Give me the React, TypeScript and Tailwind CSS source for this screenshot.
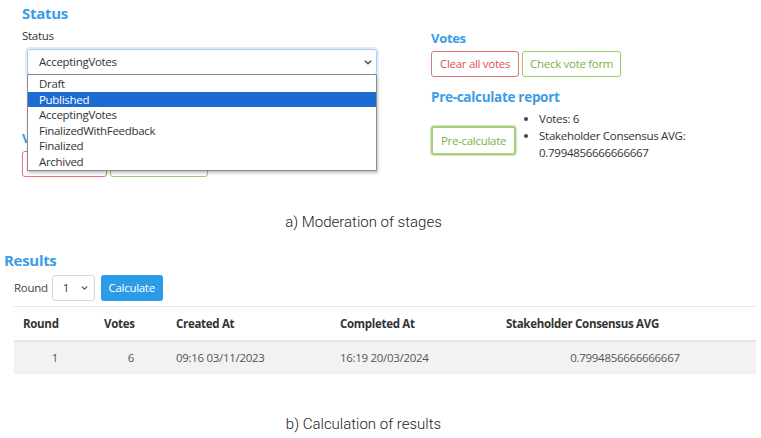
import React from "react";

const UI = { fontFamily: '"Open Sans", "Noto Sans", sans-serif' };
const CAPTION = { fontFamily: 'Roboto, "Open Sans", sans-serif' };

function Chevron({ className = "" }: { className?: string }) {
  return (
    <svg viewBox="0 0 10 6" className={className} fill="none" stroke="#444" strokeWidth="1.6" strokeLinecap="round" strokeLinejoin="round">
      <path d="M1.5 1.2 5 4.6 8.5 1.2" />
    </svg>
  );
}

const statuses = ["Draft", "Published", "AcceptingVotes", "FinalizedWithFeedback", "Finalized", "Archived"];

function StatusPanel() {
  return (
    <div className="w-[431px] pl-[22px]">
      <h2 className="mt-[3px] text-[15px] font-bold leading-[20px] tracking-[-0.3px] text-[#3a9be6]">Status</h2>
      <div className="mt-[5px] text-[11.5px] leading-[16px] tracking-[-0.3px] text-[#333]">Status</div>
      <div className="relative ml-[5px] mt-[5px] w-[350px]">
        <div className="flex h-[26px] items-center justify-between rounded-[3px] border border-[#a6d0f3] pl-[11px] pr-[4px] text-[11.5px] tracking-[-0.3px] text-[#333] shadow-[0_0_0_2px_rgba(160,205,245,0.35)]">
          <span>AcceptingVotes</span>
          <Chevron className="h-[5px] w-[8px]" />
        </div>
        {/* section partly covered by the open list */}
        <div className="-ml-[5px] mt-[54px]">
          <h2 className="text-[13px] font-bold leading-[18px] tracking-[-0.3px] text-[#3a9be6]">Votes</h2>
          <div className="mt-[4px] flex gap-[3px]">
            <div className="h-[26px] w-[85px] rounded-[3px] border border-[#e57373]" />
            <div className="h-[26px] w-[98px] rounded-[3px] border border-[#9ccc65]" />
          </div>
        </div>
        <ul className="absolute left-0 top-[25px] w-[350px] border border-[#8c8c8c] bg-white py-[1px] text-[11.5px] tracking-[-0.3px] text-[#333] shadow-[1px_2px_3px_rgba(0,0,0,0.25)]">
          {statuses.map((s) => (
            <li
              key={s}
              className={
                "h-[15.5px] pl-[11px] leading-[15.5px] " +
                (s === "Published" ? "bg-[#1c6bd3] text-white" : "")
              }
            >
              {s}
            </li>
          ))}
        </ul>
      </div>
    </div>
  );
}

function VotesPanel() {
  return (
    <div className="pt-[29px] tracking-[-0.3px]">
      <h2 className="text-[13px] font-bold leading-[18px] text-[#3a9be6]">Votes</h2>
      <div className="mt-[4px] flex gap-[3px]">
        <button className="h-[26px] rounded-[3px] border border-[#e57373] px-[8px] text-[11.5px] text-[#d9534f]">Clear all votes</button>
        <button className="h-[26px] rounded-[3px] border border-[#9ccc65] px-[7px] text-[11.5px] text-[#7cb342]">Check vote form</button>
      </div>
      <h2 className="mt-[11px] text-[13.5px] font-bold leading-[18px] text-[#3a9be6]">Pre-calculate report</h2>
      <div className="mt-[4px] flex">
        <button className="mt-[16px] h-[29px] rounded-[3px] border-2 border-[#a5cf7c] px-[8px] text-[11.5px] text-[#7cb342] shadow-[0_0_0_1px_rgba(165,207,124,0.45)]">
          Pre-calculate
        </button>
        <ul className="ml-[10px] list-disc pl-[13px] text-[11.5px] leading-[17px] text-[#333] marker:text-[#444]">
          <li>Votes: 6</li>
          <li>
            Stakeholder Consensus AVG:
            <br />
            0.7994856666666667
          </li>
        </ul>
      </div>
    </div>
  );
}

const rows = [{ round: "1", votes: "6", created: "09:16 03/11/2023", completed: "16:19 20/03/2024", avg: "0.7994856666666667" }];

function ResultsPanel() {
  return (
    <div className="tracking-[-0.3px]">
      <h2 className="pl-[4px] text-[15px] font-bold leading-[20px] text-[#3a9be6]">Results</h2>
      <div className="mt-[5px] flex h-[26px] items-center pl-[14px] text-[11.5px] text-[#444]">
        <span>Round</span>
        <div className="ml-[4px] flex h-[26px] w-[43px] items-center justify-between rounded-[3px] border border-[#d6d6d6] pl-[10px] pr-[6px] text-[#333]">
          <span>1</span>
          <Chevron className="h-[4px] w-[7px]" />
        </div>
        <button className="ml-[6px] h-[26px] w-[62px] rounded-[3px] bg-[#2c9ce8] text-[11.5px] text-white">Calculate</button>
      </div>
      <table className="ml-[14px] mt-[5px] w-[742px] border-collapse text-[11.5px]">
        <thead>
          <tr className="h-[34px] border-t border-[#e8e8e8] text-left font-bold text-[#333]">
            <th className="w-[82px] pl-[9px]">Round</th>
            <th className="w-[80px] pl-[8px]">Votes</th>
            <th className="w-[164px]">Created At</th>
            <th className="w-[166px]">Completed At</th>
            <th>Stakeholder Consensus AVG</th>
          </tr>
        </thead>
        <tbody>
          {rows.map((r) => (
            <tr key={r.round} className="h-[33px] border-t-2 border-[#e6e6e6] bg-[#f2f2f2] text-[#555]">
              <td className="text-center">{r.round}</td>
              <td className="pr-[10px] text-center">{r.votes}</td>
              <td>{r.created}</td>
              <td>{r.completed}</td>
              <td className="pr-[12px] text-center">{r.avg}</td>
            </tr>
          ))}
        </tbody>
      </table>
    </div>
  );
}

export default function App() {
  return (
    <div className="h-[438px] w-[761px] overflow-hidden bg-white" style={UI}>
      <div className="flex h-[212px]">
        <StatusPanel />
        <VotesPanel />
      </div>
      <p className="pr-[34px] text-center text-[15px] font-light leading-[20px] text-[#222]" style={CAPTION}>
        a) Moderation of stages
      </p>
      <div className="mt-[18px]">
        <ResultsPanel />
      </div>
      <p className="mt-[40px] pr-[34px] text-center text-[15px] font-light leading-[20px] text-[#222]" style={CAPTION}>
        b) Calculation of results
      </p>
    </div>
  );
}
